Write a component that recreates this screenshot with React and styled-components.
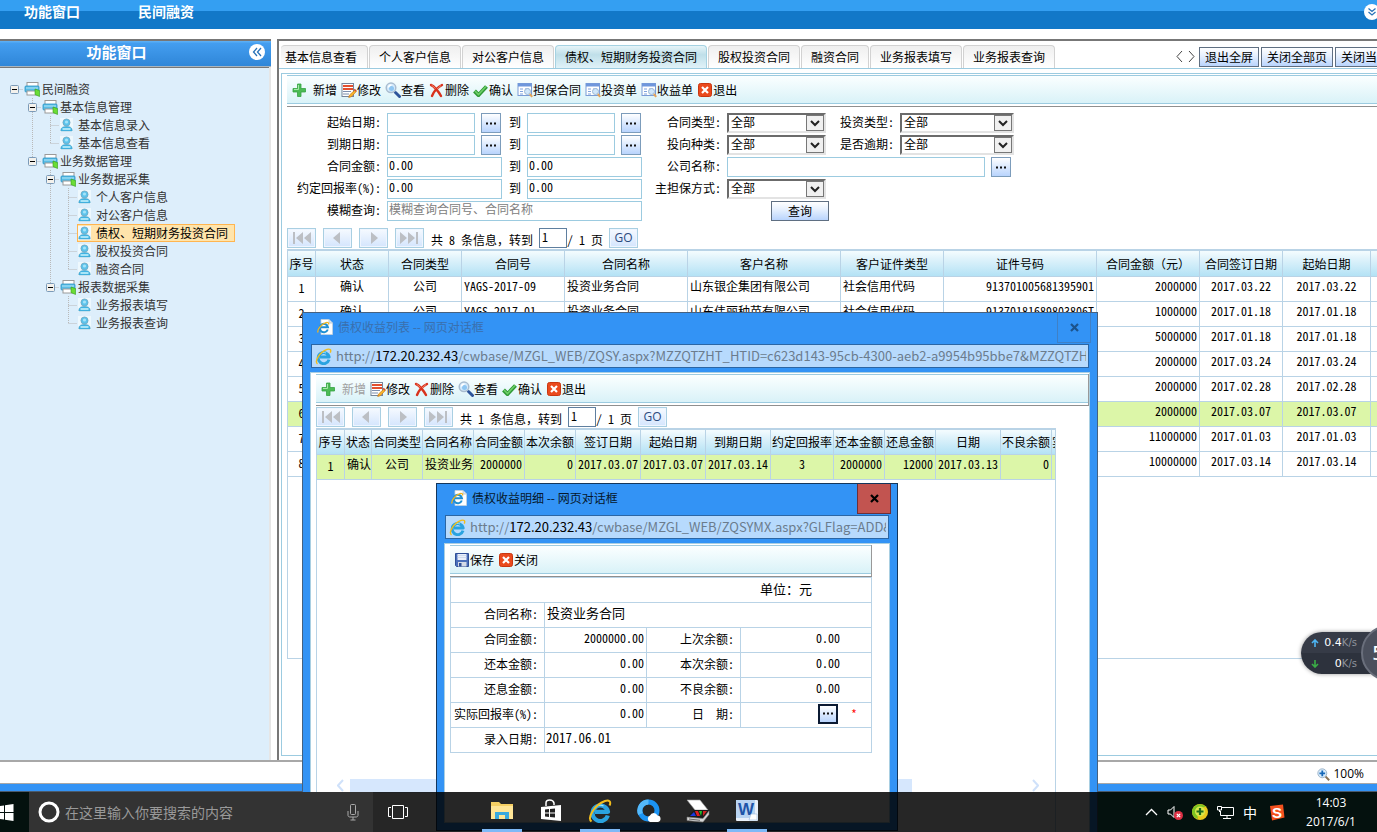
import React from "react";
import styled, { createGlobalStyle, css } from "styled-components";

const SONG = '"Noto Sans Mono CJK SC", "Noto Sans CJK SC", sans-serif';
const UI = '"Open Sans", "Noto Sans CJK SC", sans-serif';
const LINE = "#b9d3e6";
const FRAME = "#9ccbe0";
const BLUE = "#3393f5";

const Global = createGlobalStyle`
  * { box-sizing: border-box; }
  body { margin: 0; overflow: hidden; font: 12px/14px ${SONG}; color: #000; }
  button, input, select { font: inherit; color: inherit; margin: 0; }
  a { color: inherit; text-decoration: none; }
  svg { display: block; flex: none; }
  ul { list-style: none; margin: 0; padding: 0; }
`;

/* ---------- page shell ---------- */
const Desktop = styled.div`
  position: relative;
  display: flex;
  flex-direction: column;
  height: 100vh;
  overflow: hidden;
  background: rgb(28, 112, 96);
`;
const TopBar = styled.header`
  display: flex;
  align-items: flex-start;
  flex: none;
  height: 29px;
  padding: 2px 0 0 24px;
  gap: 58px;
  background: linear-gradient(#349ff2 0 11px, #1278c8 11px 100%);
  color: #fff;
  font-size: 14px;
  line-height: 18px;
  font-weight: 700;
`;
const TopSpacer = styled.span`
  flex: 1;
`;
const RoundButton = styled.button`
  display: grid;
  place-items: center;
  flex: none;
  width: 16px;
  height: 16px;
  padding: 0;
  border: 0;
  border-radius: 50%;
  background: #fff;
  color: #2872b8;
`;
const TopRound = styled(RoundButton)`
  margin: 2px -3px 0 0;
`;
const Workspace = styled.div`
  display: flex;
  flex: 1;
  min-height: 0;
  gap: 6px;
  padding-top: 10px;
  background: #fff;
`;
const Sidebar = styled.aside`
  display: flex;
  flex-direction: column;
  flex: none;
  width: 271px;
  border-top: 2px solid #777;
`;
const SideHeader = styled.div`
  display: flex;
  align-items: center;
  height: 26px;
  padding: 0 6px 4px 0;
  background: linear-gradient(#5aaef5 0 1px, #449ef0 2px, #2f86d8 100%);
  border-bottom: 1px solid #a9b4bd;
  color: #fff;
`;
const SideTitle = styled.h2`
  flex: 1;
  margin: 0 0 0 -16px;
  text-align: center;
  font-size: 15px;
  line-height: 20px;
  font-weight: 700;
`;
const Tree = styled.ul`
  flex: 1;
  margin: 0 2px 0 0;
  padding: 12px 0 0 5px;
  background: #ddeefb;
  border-top: 1px solid #777;
  box-shadow: 2px 0 0 #e6e6e6;
  color: #333;
`;
const TreeRow = styled.li`
  display: flex;
  align-items: center;
  height: 18px;
`;
const TreeLink = styled.a`
  display: flex;
  align-items: center;
  height: 18px;
  gap: ${(p) => (p.$leaf ? 5 : 2)}px;
  padding-left: 1px;
  ${(p) =>
    p.$active &&
    css`
      padding-right: 6px;
      background: #ffe4ab;
      border: 1px solid #ffb550;
      padding-left: 0;
      color: #000;
    `}
`;

/* ---------- main panel ---------- */
const Main = styled.main`
  display: flex;
  flex-direction: column;
  flex: 1;
  min-width: 0;
  border-top: 2px solid #777;
  border-left: 2px solid #777;
  overflow: hidden;
`;
const TabBar = styled.nav`
  display: flex;
  align-items: flex-end;
  flex: none;
  gap: 1px;
  height: 28px;
  padding-left: 2px;
  border-bottom: 1px solid ${FRAME};
`;
const Tab = styled.button`
  flex: none;
  height: 23px;
  padding: 0 9px;
  border: 1px solid #d2d2d2;
  border-bottom: 0;
  border-radius: 4px 4px 0 0;
  background: linear-gradient(#efefef, #fff);
  white-space: nowrap;
  &:first-child {
    padding: 0 10px 0 4px;
    border-left: 0;
  }
  ${(p) =>
    p.$active &&
    css`
      border-color: #a5d2e2;
      background: linear-gradient(#e6f4f8, #bfdfe9 40%, #e0f2f8);
    `}
`;
const TabTools = styled.div`
  display: flex;
  align-items: center;
  flex: none;
  gap: 2px;
  height: 23px;
  margin-left: auto;
  margin-right: -30px;
`;
const Arrows = styled.div`
  display: flex;
  gap: 5px;
  margin-right: 2px;
`;
const BareButton = styled.button`
  padding: 0;
  border: 0;
  background: none;
`;
const PushButton = styled.button`
  height: 20px;
  width: ${(p) => p.$w}px;
  flex: none;
  padding: 0 5px;
  border: 1px solid #5f6f82;
  background: linear-gradient(#fff, #e4effe 45%, #b9d4fd);
  white-space: nowrap;
`;
const DotButton = styled.button`
  display: grid;
  place-items: center;
  flex: none;
  width: 20px;
  height: 20px;
  padding: 0;
  border: ${(p) => (p.$focus ? "2px solid #0b1a33" : "1px solid #7c9cbb")};
  background: linear-gradient(#fff, #dbe9fe 50%, #b9d4fd);
`;
const Frame = styled.section`
  display: flex;
  flex-direction: column;
  flex: 1;
  min-height: 0;
  margin: 4px 0 4px 2px;
  padding: 1px 0 0 5px;
  border: solid ${FRAME};
  border-width: 1px 0 1px 1px;
`;
const ToolbarBox = styled.div`
  flex: none;
  padding-bottom: 2px;
  border-bottom: 1px solid #8f8f8f;
  border-right: ${(p) => (p.$edge ? "1px solid #999" : "0")};
`;
const ToolbarInner = styled.div`
  display: flex;
  align-items: center;
  gap: 4px;
  height: 29px;
  padding: 0 4px;
  border: solid ${FRAME};
  border-width: 1px 0;
  background: linear-gradient(#fbffff, #d9f2f8);
`;
const ToolItem = styled.button`
  display: flex;
  align-items: center;
  gap: ${(p) => (p.$wide ? 6 : 0)}px;
  padding: 0;
  border: 0;
  background: none;
  white-space: nowrap;
  color: ${(p) => (p.disabled ? "#a0a0a0" : "#000")};
`;
const Filters = styled.form`
  display: grid;
  flex: none;
  grid-template-columns: 94px 115px 13px 115px 73px 99px 62px 114px;
  grid-auto-rows: 20px;
  gap: 2px 6px;
  padding: 6px 0 7px;
`;
const Label = styled.label`
  grid-column: ${(p) => p.$col || "auto"};
  line-height: 18px;
  text-align: right;
  white-space: nowrap;
`;
const Cell = styled.div`
  display: flex;
  gap: 6px;
  grid-column: ${(p) => p.$col || "auto"};
  padding-left: ${(p) => p.$indent || 0}px;
`;
const TextInput = styled.input`
  flex: ${(p) => (p.$w ? "none" : "1")};
  width: ${(p) => (p.$w ? p.$w + "px" : "auto")};
  min-width: 0;
  height: 20px;
  padding: 0 1px 5px;
  border: 1px solid ${FRAME};
  background: #fff;
  line-height: 13px;
  &::placeholder {
    color: #808080;
    opacity: 1;
  }
`;
const SelectWrap = styled.div`
  position: relative;
  flex: 1;
  height: 20px;
  border: 2px solid;
  border-color: #6b6b6b #e3e3e3 #e3e3e3 #6b6b6b;
`;
const SelectBox = styled.select`
  display: block;
  appearance: none;
  width: 100%;
  height: 16px;
  padding: 0 2px 2px;
  border: 0;
  background: #fff;
  line-height: 14px;
`;
const SelectArrow = styled.span`
  position: absolute;
  top: 0;
  right: 0;
  display: grid;
  place-items: center;
  width: 18px;
  height: 16px;
  border: 1px solid #777;
  background: #f0f0f0;
  pointer-events: none;
`;
const PagerBar = styled.div`
  display: flex;
  align-items: center;
  flex: none;
  height: 21px;
  padding-bottom: 1px;
  white-space: pre;
`;
const PageButton = styled.button`
  display: grid;
  place-items: center;
  width: 29px;
  height: 20px;
  margin-right: 7px;
  padding: 0;
  border: 1px solid #a9cfe2;
  background: linear-gradient(#f6faff, #d4e5fd);
  box-shadow: inset 0 0 0 1px #eef5ff;
  color: #2b4a7d;
  font: 12px/14px ${UI};
`;
const PageText = styled.label`
  line-height: 18px;
  padding-top: 3px;
`;
const PageInput = styled.input`
  width: 28px;
  height: 20px;
  margin-left: 6px;
  padding: 0 2px 4px;
  border: 1px solid #5f7f9f;
`;

/* ---------- data tables ---------- */
const GridBox = styled.div`
  flex: ${(p) => p.$flex};
  min-height: 0;
  overflow: hidden;
  width: ${(p) => (p.$w ? p.$w + "px" : "auto")};
  border: solid ${LINE};
  border-width: ${(p) => (p.$w ? "2px 1px 0" : "2px 0 1px 1px")};
`;
const Table = styled.table`
  table-layout: fixed;
  width: ${(p) => p.$w}px;
  border-spacing: 0;
`;
const Th = styled.th`
  height: ${(p) => p.$h}px;
  padding: 0;
  overflow: hidden;
  border: solid ${LINE};
  border-width: 0 1px 1px 0;
  background: linear-gradient(#f2fbfe 0 1px, #e0f3fb 30%, #b4e2f5);
  font-weight: 400;
  white-space: nowrap;
`;
const Tr = styled.tr`
  background: ${(p) => (p.$on ? "#dcf6a8" : "#fff")};
`;
const Td = styled.td`
  height: 25px;
  padding: ${(p) => (p.$index ? "0 0 2px" : "2px 2px 8px")};
  overflow: hidden;
  border: solid ${LINE};
  border-width: 0 1px 1px 0;
  text-align: ${(p) => p.$align};
  vertical-align: ${(p) => (p.$index ? "middle" : "top")};
  white-space: nowrap;
`;

/* ---------- windows ---------- */
const Window = styled.section`
  position: absolute;
  left: ${(p) => p.$x}px;
  top: ${(p) => p.$y}px;
  bottom: ${(p) => p.$bottom}px;
  width: ${(p) => p.$w}px;
  display: flex;
  flex-direction: column;
  padding: 0 7px 7px;
  border: 1px solid ${(p) => (p.$active ? "#14365c" : "#46617f")};
  background: ${BLUE};
`;
const TitleBar = styled.div`
  display: flex;
  align-items: flex-start;
  flex: none;
  gap: 5px;
  height: 31px;
  padding-left: 7px;
  color: ${(p) => (p.$active ? "#06182c" : "#3a6fad")};
`;
const TitleText = styled.h3`
  flex: 1;
  margin: 5px 0 0;
  font: 12px/18px "Noto Sans CJK SC", sans-serif;
`;
const TitleIcon = styled.span`
  margin-top: 6px;
`;
const CloseButton = styled.button`
  width: 34px;
  height: 30px;
  margin-right: -1px;
  padding: 0;
  display: grid;
  place-items: center;
  border: 1px solid ${(p) => (p.$active ? "#6c2f3a" : "#3f80c6")};
  border-top: 0;
  background: ${(p) => (p.$active ? "#c25450" : "transparent")};
  color: ${(p) => (p.$active ? "#000" : "#1c538c")};
`;
const Address = styled.div`
  display: flex;
  align-items: center;
  flex: none;
  gap: 4px;
  height: 24px;
  margin: 0 1px 4px;
  padding: 0 2px 0 3px;
  border: 1px solid #2b66a5;
  background: #b7dafd;
  color: #6b7c8d;
  font: 13px/20px "Noto Sans CJK SC", sans-serif;
  white-space: nowrap;
`;
const AddressText = styled.span`
  overflow: hidden;
  b {
    font-weight: 400;
    color: #000;
  }
`;
const WindowBody = styled.div`
  display: flex;
  flex-direction: column;
  flex: 1;
  min-height: 0;
  padding: ${(p) => p.$pad};
  border: 1px solid #a9cfe2;
  background: #fff;
`;
const ListPager = styled.div`
  padding-top: 1px;
`;
const ScrollBar = styled.div`
  display: flex;
  align-items: center;
  gap: 6px;
  height: 17px;
  margin: 0 16px 0 20px;
`;
const ScrollThumb = styled.div`
  width: 562px;
  height: 14px;
  margin-right: auto;
  background: #d6e7fd;
`;
const ScrollArea = styled.div`
  display: flex;
  flex-direction: column;
  justify-content: flex-end;
  flex: 1;
  width: 740px;
  padding-bottom: 69px;
  border: solid ${LINE};
  border-width: 0 1px;
`;
const FormTable = styled.table`
  table-layout: fixed;
  width: 422px;
  border: solid ${LINE};
  border-width: 1px 0 0 1px;
  border-spacing: 0;
`;
const FormCell = styled.td`
  height: 25px;
  padding: 0 ${(p) => p.$pr || 0}px 3px ${(p) => p.$pl || 0}px;
  border: solid ${LINE};
  border-width: 0 1px 1px 0;
  text-align: ${(p) => p.$align || "left"};
  font-size: ${(p) => p.$size || 12}px;
  line-height: 14px;
  white-space: pre;
`;
const FormInput = styled.input`
  display: block;
  width: 100%;
  height: 21px;
  padding: 0 0 3px;
  border: 0;
  background: none;
  text-align: inherit;
`;
const DateCell = styled.div`
  display: flex;
  align-items: center;
  justify-content: flex-end;
  gap: 13px;
  color: #f00;
`;

/* ---------- status bar, taskbar ---------- */
const StatusBar = styled.footer`
  display: flex;
  align-items: center;
  justify-content: flex-end;
  flex: none;
  gap: 3px;
  height: 24px;
  padding: 3px 13px 0 0;
  border: solid #a8a8a8;
  border-width: 2px 0 1px;
  background: #fff;
  font: 12px/16px ${UI};
`;
const WindowEdge = styled.div`
  flex: none;
  height: 8px;
  background: ${BLUE};
  border-bottom: 1px solid #4a5a6c;
`;
const Taskbar = styled.footer`
  position: relative;
  z-index: 5;
  display: flex;
  flex: none;
  height: 40px;
  background: rgba(0, 0, 0, 0.85);
  color: #fff;
`;
const StartButton = styled.button`
  width: 29px;
  padding: 0;
  border: 0;
  background: none;
  display: flex;
  align-items: center;
  justify-content: flex-start;
`;
const SearchBox = styled.label`
  display: flex;
  align-items: center;
  gap: 5px;
  width: 344px;
  padding: 0 14px 0 9px;
  background: #333;
`;
const SearchInput = styled.input`
  flex: 1;
  min-width: 0;
  padding: 0;
  border: 0;
  outline: 0;
  background: none;
  font: 14px/20px "Noto Sans CJK SC", sans-serif;
  &::placeholder {
    color: #999;
    opacity: 1;
  }
`;
const TaskButton = styled.button`
  display: grid;
  place-items: center;
  width: 49px;
  padding: 0;
  border: 0;
  background: none;
`;
const AppList = styled.div`
  display: flex;
  gap: 9px;
  margin-left: 60px;
`;
const AppButton = styled.button`
  display: grid;
  place-items: center;
  width: 40px;
  height: 40px;
  padding: 0;
  border: 0;
  background: none;
  border-bottom: 3px solid ${(p) => (p.$open ? "#7db9f7" : "transparent")};
`;
const Tray = styled.div`
  display: flex;
  align-items: center;
  gap: 9px;
  margin-left: auto;
  padding-right: 19px;
`;
const Clock = styled.time`
  width: 54px;
  margin-left: 10px;
  text-align: center;
  font: 12px/19px ${UI};
  white-space: pre;
`;
const ImeText = styled.span`
  margin-right: 2px;
  font: 14px/16px "Noto Sans CJK SC", sans-serif;
`;
const Meter = styled.aside`
  position: absolute;
  right: 0;
  top: 632px;
  z-index: 4;
  display: flex;
  width: 76px;
  height: 42px;
  border-radius: 21px 0 0 21px;
  background: linear-gradient(#363b47 0 21px, #2d323d 21px);
  box-shadow: 0 0 4px rgba(0, 0, 0, 0.4);
  color: #fff;
  font: 11px/21px "DejaVu Sans", sans-serif;
`;
const MeterRows = styled.div`
  flex: none;
  width: 56px;
  padding-left: 10px;
`;
const MeterRow = styled.div`
  display: flex;
  align-items: center;
  justify-content: space-between;
  small {
    color: #8e939c;
    font-size: 10px;
  }
`;
const MeterDial = styled.div`
  flex: none;
  width: 56px;
  height: 56px;
  margin-left: 4px;
  padding-left: 9px;
  border-radius: 50%;
  border: 2px solid #6a6f7c;
  background: #4b505d;
  font-size: 20px;
  line-height: 52px;
`;
const Clip = styled.div`
  flex: 1;
  display: flex;
  margin: -7px 0;
  overflow: hidden;
`;

/* ---------- icons ---------- */
const Ic = ({ w = 16, h, children, vb }) => (
  <svg width={w} height={h || w} viewBox={vb || "0 0 16 16"} fill="none" aria-hidden="true">
    {children}
  </svg>
);
const PlusIcon = () => (
  <Ic>
    <path d="M6.500 2h3.500v4.500h4.500V10H10v4.500H6.500V10H2V6.500h4.500z" fill="#4cbb55" stroke="#35a343" strokeWidth=".8" />
    <path d="M7.500 3v4.500H3" stroke="#a5e8a8" />
  </Ic>
);
const EditIcon = () => (
  <Ic>
    <rect x="1" y="1.500" width="11.500" height="13" fill="#fff" stroke="#76859a" />
    <path d="M2 4h10M2 7h10" stroke="#e2502f" strokeWidth="2" />
    <path d="M2 9.500h8M2 12h6" stroke="#7d8fae" strokeWidth="1.200" />
    <path d="M14 8l-5.500 5-.8 2.500 2.600-.8 5-5.200z" fill="#f8b62c" stroke="#c8771b" strokeWidth=".7" />
    <path d="M13.300 7.300l2 2" stroke="#d64b32" strokeWidth="1.500" />
  </Ic>
);
const LookIcon = () => (
  <Ic>
    <path d="M10.500 10.500l4 4" stroke="#2d549b" strokeWidth="3" strokeLinecap="round" />
    <circle cx="6" cy="5.800" r="4.800" fill="#d3eafc" stroke="#a9bccf" strokeWidth="1.500" />
    <circle cx="6.500" cy="6.500" r="2.500" fill="#8ec6f2" />
    <path d="M3.500 5.500a3 3 0 013-2.500" stroke="#fff" strokeWidth="1.500" />
  </Ic>
);
const DeleteIcon = () => (
  <Ic>
    <path d="M2 3c3 1 8 7 10 11M13 3C9 5 5 9 3 14" stroke="#d8321c" strokeWidth="2.400" strokeLinecap="round" />
    <path d="M2.500 3l4 3.500M12 3.500L8 7" stroke="#f4866b" strokeWidth="1" />
  </Ic>
);
const CheckIcon = () => (
  <Ic>
    <path d="M1.500 9L5.500 13 13.500 4.500" stroke="#2f9a35" strokeWidth="4" strokeLinejoin="round" />
    <path d="M2 9l3.500 3.500L13 4.500" stroke="#6fcf6a" strokeWidth="1.600" />
  </Ic>
);
const FormIcon = () => (
  <Ic>
    <rect x="1" y="1.500" width="13.500" height="12" fill="#fff" stroke="#7a9cd6" />
    <rect x="1" y="1.500" width="13.500" height="3" fill="#6f97dc" />
    <path d="M3 7h3M3 9.500h3M3 12h3M8 7h4" stroke="#7fa2dd" />
    <circle cx="10.500" cy="9.500" r="3" fill="#cfe6fa" stroke="#9cb8d4" />
    <path d="M12.800 12l2.400 2.800" stroke="#e4a45a" strokeWidth="2" />
  </Ic>
);
const ExitIcon = () => (
  <Ic>
    <rect x="1.500" y="1.500" width="13" height="13" rx="2" fill="#ea4a1d" stroke="#c93710" />
    <path d="M5 5l6 6M11 5l-6 6" stroke="#fff" strokeWidth="2.200" />
  </Ic>
);
const SaveIcon = () => (
  <Ic>
    <path d="M1.500 1.500h13v13h-12l-1-1z" fill="#4a70bb" stroke="#2f5097" />
    <rect x="3.500" y="2" width="9" height="6" fill="#e9f0fa" />
    <path d="M3.500 3.500h9M3.500 5.500h9" stroke="#c3d2e8" strokeWidth=".7" />
    <rect x="4" y="10" width="8.500" height="4.500" fill="#d3dbe7" />
    <rect x="5" y="11" width="2.500" height="3.500" fill="#2f5097" />
  </Ic>
);
const FolderIcon = () => (
  <Ic>
    <rect x="3" y="1.500" width="11" height="5" fill="#fff" stroke="#9a9a9a" />
    <rect x="1" y="5" width="14" height="6" rx="1" fill="#58bde6" stroke="#2a93c4" strokeWidth=".8" />
    <path d="M2 7h12" stroke="#b5e6f8" />
    <rect x="3" y="10" width="10" height="4" fill="#fff" stroke="#9a9a9a" />
    <path d="M11 8l4.500 1.500v6L11 13.500z" fill="#6bdc35" stroke="#2f9e18" strokeWidth=".6" />
  </Ic>
);
const UserIcon = () => (
  <Ic w={13} h={14} vb="0 0 13 14">
    <rect width="13" height="14" fill="#eef8fd" />
    <path d="M.8 13c0-3.500 2-4.500 5.700-4.500s5.700 1 5.700 4.500z" fill="#3fb5e6" stroke="#4a9cc0" strokeWidth=".5" />
    <circle cx="6.500" cy="4.500" r="3.600" fill="#5cc3ec" stroke="#6b9bb0" strokeWidth=".6" />
    <path d="M2.500 11h8" stroke="#c4f1fc" strokeWidth="1.600" />
    <circle cx="6.500" cy="4" r="1.600" fill="#a5e3f8" />
  </Ic>
);
const Dots = () => (
  <Ic w={12} h={3} vb="0 0 12 3">
    <path d="M1 .5h2v2H1zM5 .5h2v2H5zM9 .5h2v2H9z" fill="#111" />
  </Ic>
);
const DoubleLeft = ({ down }) => (
  <Ic w={10} vb="0 0 10 10">
    {down ? (
      <path d="M1.500 1.500L5 4.500l3.500-3M1.500 5L5 8l3.500-3" stroke="currentColor" strokeWidth="1.300" />
    ) : (
      <path d="M5 1L1.500 5 5 9M9 1L5.500 5 9 9" stroke="currentColor" strokeWidth="1.300" />
    )}
  </Ic>
);
const Angle = ({ flip, color = "#444", sw = 1 }) => (
  <Ic w={7} h={13} vb="0 0 7 13">
    <path d={flip ? "M1 1l5 5.500L1 12" : "M6 1L1 6.500 6 12"} stroke={color} strokeWidth={sw} />
  </Ic>
);
const IeMark = ({ w = 17 }) => (
  <Ic w={w} vb="0 0 24 24">
    <path d="M19.800 16.500A7.800 7.800 0 1 1 20 12.800H7" stroke="#2aa3e0" strokeWidth="4.200" strokeLinejoin="round" />
    <path d="M6.500 9.500a6.500 6.500 0 019-2.500" stroke="#9be0fa" strokeWidth="1.400" />
    <path d="M3.500 22.500C-1 19 6 6 17 2c4-1.200 6.500.3 4.500 4.500" stroke="#f2bd1c" strokeWidth="2" />
  </Ic>
);
const IePage = () => (
  <Ic w={16} vb="0 0 16 16">
    <path d="M4 .5h8l3.500 3.500v11.500H4z" fill="#fff" stroke="#c8d3dc" strokeWidth=".8" />
    <path d="M12 .5V4h3.500" fill="#dde6ee" stroke="#b5c2cd" strokeWidth=".8" />
    <path d="M10.800 10.500A4.200 4.200 0 1 1 11 8.300H4" stroke="#1f8fd2" strokeWidth="2" />
    <path d="M1 13.500C0 11 4 5 9 3.600c2-.5 3 .2 2.500 1.900" stroke="#f2b51c" strokeWidth="1.300" />
  </Ic>
);

/* ---------- reusable parts ---------- */
const ICONS = {
  plus: PlusIcon, edit: EditIcon, look: LookIcon, del: DeleteIcon,
  check: CheckIcon, form: FormIcon, exit: ExitIcon, save: SaveIcon,
};
function Toolbar({ items, edge }) {
  return (
    <ToolbarBox $edge={edge}>
      <ToolbarInner role="toolbar">
        {items.map(([icon, text, disabled]) => {
          const Icon = ICONS[icon];
          return (
            <ToolItem key={text} type="button" $wide={icon === "plus"} disabled={disabled}>
              <Icon />
              {text}
            </ToolItem>
          );
        })}
      </ToolbarInner>
    </ToolbarBox>
  );
}

const PAGER_ARROWS = [
  ["首页", "M2 0h2v12H2zM12 0v12L5 6zM20 0v12l-7-6z"],
  ["上一页", "M13 0v12L6 6z"],
  ["下一页", "M8 0v12l7-6z"],
  ["末页", "M17 0h2v12h-2zM1 0v12l7-6zM9 0v12l7-6z"],
];
function Pager({ id, total }) {
  return (
    <PagerBar>
      {PAGER_ARROWS.map(([label, d]) => (
        <PageButton key={label} type="button" aria-label={label}>
          <Ic w={21} h={12} vb="0 0 21 12">
            <path d={d} fill="#bcbfc4" />
          </Ic>
        </PageButton>
      ))}
      <PageText htmlFor={id}>{`共 ${total} 条信息，转到`}</PageText>
      <PageInput id={id} defaultValue="1" />
      <PageText as="span">{"/ 1 页 "}</PageText>
      <PageButton type="button">GO</PageButton>
    </PagerBar>
  );
}

function DataTable({ columns, rows, selected, head = 26 }) {
  const total = columns.reduce((sum, c) => sum + c[1], 0);
  return (
    <Table $w={total}>
      <colgroup>
        {columns.map((c, i) => (
          <col key={i} width={c[1]} />
        ))}
      </colgroup>
      <thead>
        <tr>
          {columns.map((c, i) => (
            <Th key={i} $h={head}>{c[0]}</Th>
          ))}
        </tr>
      </thead>
      <tbody>
        {rows.map((row, r) => (
          <Tr key={r} $on={r === selected}>
            {columns.map((c, i) => (
              <Td key={i} $index={i === 0} $align={c[2] || "center"}>
                {row[i]}
              </Td>
            ))}
          </Tr>
        ))}
      </tbody>
    </Table>
  );
}

function Select({ id }) {
  return (
    <SelectWrap>
      <SelectBox id={id} defaultValue="all">
        <option value="all">全部</option>
      </SelectBox>
      <SelectArrow>
        <Ic w={10} h={7} vb="0 0 10 7">
          <path d="M1 1l4 4 4-4" stroke="#222" strokeWidth="2" />
        </Ic>
      </SelectArrow>
    </SelectWrap>
  );
}

function PickButton({ label }) {
  return (
    <DotButton type="button" aria-label={label}>
      <Dots />
    </DotButton>
  );
}

/* ---------- tree ---------- */
const TREE = [
  ["R", "民间融资"],
  [" B", "基本信息管理"],
  [" vt", "基本信息录入"],
  [" vl", "基本信息查看"],
  [" E", "业务数据管理"],
  ["  B", "业务数据采集"],
  ["  vt", "个人客户信息"],
  ["  vt", "对公客户信息"],
  ["  vt", "债权、短期财务投资合同", true],
  ["  vt", "股权投资合同"],
  ["  vl", "融资合同"],
  ["  E", "报表数据采集"],
  ["   t", "业务报表填写"],
  ["   l", "业务报表查询"],
];
const GUIDES = {
  " ": "",
  v: "M9.500 0v18",
  t: "M9.500 0v18M9.500 9.500h9",
  l: "M9.500 0v10M9.500 9.500h9",
  R: "M9.500 9.500h9",
  B: "M9.500 0v18M9.500 9.500h9",
  E: "M9.500 0v9M9.500 9.500h9",
};
function Guide({ kind }) {
  const isToggle = "RBE".includes(kind);
  return (
    <svg width="18" height="18" viewBox="0 0 18 18" fill="none" aria-hidden="true">
      <path d={GUIDES[kind]} stroke="#b9b9b9" strokeDasharray="1 1" />
      {isToggle && (
        <>
          <rect x="5.500" y="5.500" width="8" height="8" rx="1" fill="#f3f1ec" stroke="#7b9ab8" />
          <path d="M7 9.500h5" stroke="#000" />
        </>
      )}
    </svg>
  );
}
function NavTree() {
  return (
    <Tree>
      {TREE.map(([guides, text, active]) => {
        const leaf = "tl".includes(guides[guides.length - 1]);
        return (
          <TreeRow key={text}>
            {guides.split("").map((g, i) => (
              <Guide key={i} kind={g} />
            ))}
            <TreeLink href="#" $leaf={leaf} $active={active}>
              {leaf ? <UserIcon /> : <FolderIcon />}
              {text}
            </TreeLink>
          </TreeRow>
        );
      })}
    </Tree>
  );
}

/* ---------- data ---------- */
const TABS = [
  "基本信息查看", "个人客户信息", "对公客户信息", "债权、短期财务投资合同",
  "股权投资合同", "融资合同", "业务报表填写", "业务报表查询",
];
const MAIN_TOOLS = [
  ["plus", "新增"], ["edit", "修改"], ["look", "查看"], ["del", "删除"], ["check", "确认"],
  ["form", "担保合同"], ["form", "投资单"], ["form", "收益单"], ["exit", "退出"],
];
const LIST_TOOLS = [
  ["plus", "新增", true], ["edit", "修改"], ["del", "删除"],
  ["look", "查看"], ["check", "确认"], ["exit", "退出"],
];
const MAIN_COLUMNS = [
  ["序号", 28], ["状态", 73], ["合同类型", 73], ["合同号", 103, "left"], ["合同名称", 123, "left"],
  ["客户名称", 153, "left"], ["客户证件类型", 103, "left"], ["证件号码", 153, "right"],
  ["合同金额（元）", 103, "right"], ["合同签订日期", 83], ["起始日期", 88], ["", 84],
];
const contract = (n, amount, date, rest = ["", "", "", "", "", "", ""]) => [
  n, ...rest, amount, date, date, "",
];
const MAIN_ROWS = [
  contract(1, "2000000", "2017.03.22", ["确认", "公司", "YAGS-2017-09", "投资业务合同", "山东银企集团有限公司", "社会信用代码", "913701005681395901"]),
  contract(2, "1000000", "2017.01.18", ["确认", "公司", "YAGS-2017-01", "投资业务合同", "山东伟丽种苗有限公司", "社会信用代码", "91370181689803806T"]),
  contract(3, "5000000", "2017.01.18"),
  contract(4, "2000000", "2017.03.24"),
  contract(5, "2000000", "2017.02.28"),
  contract(6, "2000000", "2017.03.07"),
  contract(7, "11000000", "2017.01.03"),
  contract(8, "10000000", "2017.03.14"),
];
const LIST_COLUMNS = [
  ["序号", 28], ["状态", 27], ["合同类型", 51], ["合同名称", 51, "left"], ["合同金额", 51, "right"],
  ["本次余额", 51, "right"], ["签订日期", 65], ["起始日期", 65], ["到期日期", 65], ["约定回报率", 63],
  ["还本金额", 51, "right"], ["还息金额", 51, "right"], ["日期", 65], ["不良余额", 51, "right"], ["实", 12],
];
const LIST_ROWS = [
  [1, "确认", "公司", "投资业务", "2000000", "0", "2017.03.07", "2017.03.07", "2017.03.14", "3", "2000000", "12000", "2017.03.13", "0", ""],
];

/* ---------- screens ---------- */
function DateRange({ id, label }) {
  return (
    <>
      <Label htmlFor={id} $col={1}>{label}</Label>
      <Cell>
        <TextInput id={id} $w={88} />
        <PickButton label={label} />
      </Cell>
      <Label htmlFor={id + "-to"}>到</Label>
      <Cell>
        <TextInput id={id + "-to"} $w={88} />
        <PickButton label={label} />
      </Cell>
    </>
  );
}
function NumberRange({ id, label }) {
  return (
    <>
      <Label htmlFor={id} $col={1}>{label}</Label>
      <Cell><TextInput id={id} defaultValue="0.00" /></Cell>
      <Label htmlFor={id + "-to"}>到</Label>
      <Cell><TextInput id={id + "-to"} defaultValue="0.00" /></Cell>
    </>
  );
}
function Picker({ id, label }) {
  return (
    <>
      <Label htmlFor={id}>{label}</Label>
      <Cell><Select id={id} /></Cell>
    </>
  );
}

function ContractPage() {
  return (
    <Frame>
      <Toolbar items={MAIN_TOOLS} />
      <Filters onSubmit={(e) => e.preventDefault()}>
        <DateRange id="start" label="起始日期:" />
        <Picker id="ctype" label="合同类型:" />
        <Picker id="itype" label="投资类型:" />
        <DateRange id="end" label="到期日期:" />
        <Picker id="target" label="投向种类:" />
        <Picker id="overdue" label="是否逾期:" />
        <NumberRange id="amount" label="合同金额:" />
        <Label htmlFor="company">公司名称:</Label>
        <Cell $col="6 / 9">
          <TextInput id="company" $w={258} />
          <PickButton label="公司名称" />
        </Cell>
        <NumberRange id="rate" label="约定回报率(%):" />
        <Picker id="guarantee" label="主担保方式:" />
        <Label htmlFor="fuzzy" $col={1}>模糊查询:</Label>
        <Cell $col="2 / 5">
          <TextInput id="fuzzy" placeholder="模糊查询合同号、合同名称" />
        </Cell>
        <Cell $col="6 / 8" $indent={44}>
          <PushButton type="submit" $w={58}>查询</PushButton>
        </Cell>
      </Filters>
      <Pager id="page-main" total={8} />
      <GridBox $flex="0 1 410px">
        <DataTable columns={MAIN_COLUMNS} rows={MAIN_ROWS} selected={5} />
      </GridBox>
    </Frame>
  );
}

function DialogFrame({ title, host, path, active, pad, children, ...pos }) {
  return (
    <Window role="dialog" aria-label={title} $active={active} {...pos}>
      <TitleBar $active={active}>
        <TitleIcon><IePage /></TitleIcon>
        <TitleText>{title} -- 网页对话框</TitleText>
        <CloseButton type="button" aria-label="关闭" $active={active}>
          <Ic w={9} h={9} vb="0 0 9 9">
            <path d="M1 1l7 7M8 1L1 8" stroke="currentColor" strokeWidth="2.200" />
          </Ic>
        </CloseButton>
      </TitleBar>
      <Address>
        <IeMark />
        <AddressText>http://<b>{host}</b>{path}</AddressText>
      </Address>
      <WindowBody $pad={pad}>{children}</WindowBody>
    </Window>
  );
}

function ListDialog() {
  return (
    <DialogFrame
      title="债权收益列表"
      host="172.20.232.43"
      path="/cwbase/MZGL_WEB/ZQSY.aspx?MZZQTZHT_HTID=c623d143-95cb-4300-aeb2-a9954b95bbe7&MZZQTZHT_H"
      pad="1px 0 0 5px"
      $x={302} $y={312} $w={796} $bottom={-40}
    >
      <Toolbar items={LIST_TOOLS} edge />
      <ListPager><Pager id="page-list" total={1} /></ListPager>
      <GridBox $flex="0 0 auto" $w={740}>
        <DataTable columns={LIST_COLUMNS} rows={LIST_ROWS} selected={0} head={25} />
      </GridBox>
      <ScrollArea>
        <ScrollBar>
          <Angle color="#cfe1fa" sw={2} />
          <ScrollThumb />
          <Angle flip color="#cfe1fa" sw={2} />
        </ScrollBar>
      </ScrollArea>
    </DialogFrame>
  );
}

const DETAIL = [
  ["合同金额:", "2000000.00", "上次余额:", "0.00"],
  ["还本金额:", "0.00", "本次余额:", "0.00"],
  ["还息金额:", "0.00", "不良余额:", "0.00"],
];
function DetailDialog() {
  return (
    <DialogFrame
      title="债权收益明细"
      host="172.20.232.43"
      path="/cwbase/MZGL_WEB/ZQSYMX.aspx?GLFlag=ADD&id"
      active
      pad="1px 17px 0 5px"
      $x={436} $y={483} $w={462} $bottom={1}
    >
      <Toolbar items={[["save", "保存"], ["exit", "关闭"]]} edge />
      <FormTable>
        <colgroup>
          <col width="94" /><col width="102" /><col width="94" /><col width="131" />
        </colgroup>
        <tbody>
          <tr>
            <FormCell colSpan={4} $align="right" $pr={59} $size={13}>单位：元</FormCell>
          </tr>
          <tr>
            <FormCell $align="right" $pr={6}><label htmlFor="d-name">合同名称:</label></FormCell>
            <FormCell colSpan={3} $pl={2} $size={13}><FormInput id="d-name" defaultValue="投资业务合同" /></FormCell>
          </tr>
          {DETAIL.map(([a, va, b, vb], i) => (
            <tr key={a}>
              <FormCell $align="right" $pr={6}><label htmlFor={"da" + i}>{a}</label></FormCell>
              <FormCell $align="right" $pr={2}><FormInput id={"da" + i} defaultValue={va} /></FormCell>
              <FormCell $align="right" $pr={6}><label htmlFor={"db" + i}>{b}</label></FormCell>
              <FormCell $align="right" $pr={31}><FormInput id={"db" + i} defaultValue={vb} /></FormCell>
            </tr>
          ))}
          <tr>
            <FormCell $align="right" $pr={6}><label htmlFor="d-rate">实际回报率(%):</label></FormCell>
            <FormCell $align="right" $pr={2}><FormInput id="d-rate" defaultValue="0.00" /></FormCell>
            <FormCell $align="right" $pr={6}><label htmlFor="d-date">{"日  期:"}</label></FormCell>
            <FormCell $align="right" $pr={14}>
              <DateCell>
                <DotButton id="d-date" type="button" $focus><Dots /></DotButton>*
              </DateCell>
            </FormCell>
          </tr>
          <tr>
            <FormCell $align="right" $pr={6}><label htmlFor="d-entry">录入日期:</label></FormCell>
            <FormCell colSpan={3} $pl={1} $size={13}><FormInput id="d-entry" defaultValue="2017.06.01" /></FormCell>
          </tr>
        </tbody>
      </FormTable>
    </DialogFrame>
  );
}

function AppIcons() {
  return (
    <AppList>
      <AppButton type="button" aria-label="文件资源管理器" $open>
        <Ic w={22} h={19} vb="0 0 22 19">
          <path d="M0 1h8l2 2h12v15H0z" fill="#f5cf63" />
          <path d="M0 5h22v13H0z" fill="#ffe596" />
          <path d="M4 18v-7h14v7h-4v-4H8v4z" fill="#39a9de" />
        </Ic>
      </AppButton>
      <AppButton type="button" aria-label="应用商店">
        <Ic w={22} h={23} vb="0 0 22 23">
          <path d="M1 8l20-2v16L1 20z" fill="#fff" />
          <path d="M6 7V4c0-4 7-4 8 0v2" stroke="#fff" strokeWidth="1.500" />
          <path d="M5 10.500l4-.4v3.500H5zM10 10l5-.5v4h-5zM5 14.500h4V18l-4-.4zM10 14.500h5v4l-5-.5z" fill="#222" />
        </Ic>
      </AppButton>
      <AppButton type="button" aria-label="浏览器" $open><IeMark w={24} /></AppButton>
      <AppButton type="button" aria-label="QQ浏览器">
        <Ic w={24} vb="0 0 24 24">
          <circle cx="11.500" cy="11.500" r="8.500" stroke="#1b93f3" strokeWidth="5" />
          <path d="M3.500 15A8.500 8.500 0 0111.500 3" stroke="#54b9fb" strokeWidth="5" />
          <path d="M13 23a3.500 3.500 0 010-6.500 4 4 0 017.500 0A3.300 3.300 0 0121 23z" fill="#fff" />
        </Ic>
      </AppButton>
      <AppButton type="button" aria-label="扫描仪">
        <Ic w={24} vb="0 0 24 24">
          <path d="M1 1h13l8 10H9z" fill="#fff" stroke="#999" strokeWidth=".6" />
          <path d="M1 18l7-7h15l-6 8z" fill="#1a1a1a" />
          <path d="M4 17l4-4 2 4z" fill="#1a38e0" />
          <path d="M9 12h3l2 5h-3z" fill="#e02020" />
          <path d="M13 12h3l-1 5z" fill="#22c02a" />
          <path d="M17 12h4l-4 5z" fill="#d02020" />
          <path d="M1 18l16 1.500L23 12v3.500L17 23 1 21.500z" fill="#d5d5d5" stroke="#777" strokeWidth=".6" />
          <path d="M3 20l11 1.300" stroke="#666" />
        </Ic>
      </AppButton>
      <AppButton type="button" aria-label="Word" $open>
        <Ic w={22} vb="0 0 22 22">
          <rect width="22" height="21" rx="1" fill="#e9f1fb" />
          <rect width="19" height="18" fill="#b9d4f2" />
          <text x="2" y="15" fontFamily="Liberation Sans" fontWeight="700" fontSize="17" fill="#1f55a8">W</text>
          <path d="M15 14h6v6h-8z" fill="#fff" stroke="#a8c2e2" strokeWidth=".7" />
        </Ic>
      </AppButton>
    </AppList>
  );
}

function SystemTray() {
  return (
    <Tray>
      <Ic w={13} h={8} vb="0 0 13 8"><path d="M1 7l5.500-5.500L12 7" stroke="#fff" strokeWidth="1.300" /></Ic>
      <Ic w={16} h={16}>
        <path d="M1 6h2.500L7 2.500v11L3.500 10H1z" stroke="#fff" />
        <circle cx="11.500" cy="11.500" r="4.500" fill="#dd3044" />
        <path d="M9.800 9.800l3.400 3.400M13.200 9.800l-3.400 3.400" stroke="#fff" strokeWidth="1.200" />
      </Ic>
      <Ic w={16}>
        <circle cx="8" cy="8" r="8" fill="#e9c81d" />
        <path d="M0 8a8 8 0 0114-5C8 2 4 8 6 15A8 8 0 010 8z" fill="#7cc522" />
        <circle cx="8" cy="7.500" r="5" fill="#d8e84a" />
        <path d="M8 4v7M4.500 7.500h7" stroke="#1c6a1c" strokeWidth="2.200" />
      </Ic>
      <Ic w={17} h={15} vb="0 0 17 15">
        <path d="M5 2.500h11.500v8H3.500V6M10 10.500V14M6 13.500h8" stroke="#fff" />
        <path d="M.5 1.500h4v3.500h-4zM2.500 5v2" stroke="#fff" />
      </Ic>
      <ImeText>中</ImeText>
      <Ic w={17} vb="0 0 17 17">
        <path d="M2 2l13-1.500 1.500 13L4 16.500z" fill="#f4511e" />
        <text x="4" y="14" fontFamily="Liberation Sans" fontWeight="700" fontSize="15" fill="#fff">S</text>
      </Ic>
      <Clock>{"14:03\n2017/6/1"}</Clock>
    </Tray>
  );
}

export default function App() {
  return (
    <Desktop>
      <Global />
      <TopBar>
        <a href="#">功能窗口</a>
        <a href="#">民间融资</a>
        <TopSpacer />
        <TopRound type="button" aria-label="展开"><DoubleLeft down /></TopRound>
      </TopBar>
      <Workspace>
        <Sidebar>
          <SideHeader>
            <SideTitle>功能窗口</SideTitle>
            <RoundButton type="button" aria-label="折叠"><DoubleLeft /></RoundButton>
          </SideHeader>
          <NavTree />
        </Sidebar>
        <Main>
          <TabBar>
            {TABS.map((t, i) => (
              <Tab key={t} type="button" $active={i === 3}>{t}</Tab>
            ))}
            <TabTools>
              <Arrows>
                <BareButton type="button" aria-label="向左"><Angle /></BareButton>
                <BareButton type="button" aria-label="向右"><Angle flip /></BareButton>
              </Arrows>
              <PushButton type="button" $w={60}>退出全屏</PushButton>
              <PushButton type="button" $w={72}>关闭全部页</PushButton>
              <PushButton type="button" $w={72}>关闭当前页</PushButton>
            </TabTools>
          </TabBar>
          <ContractPage />
        </Main>
      </Workspace>
      <StatusBar>
        <Ic w={13} h={13}>
          <path d="M10 10l5 5" stroke="#8a7355" strokeWidth="2.500" />
          <circle cx="6.500" cy="6.500" r="5.500" fill="#d9ecfb" stroke="#8fa9c0" />
          <path d="M6.500 3v7M3 6.500h7" stroke="#1668b8" strokeWidth="2.200" />
        </Ic>
        100%
      </StatusBar>
      <WindowEdge />
      <ListDialog />
      <DetailDialog />
      <Meter>
        <MeterRows>
          <MeterRow>
            <Ic w={8} vb="0 0 8 8"><path d="M4 8V1M1 4l3-3 3 3" stroke="#4db4f2" strokeWidth="1.600" /></Ic>
            <span>0.4<small>K/s</small></span>
          </MeterRow>
          <MeterRow>
            <Ic w={8} vb="0 0 8 8"><path d="M4 0v7M1 4l3 3 3-3" stroke="#3aae46" strokeWidth="1.600" /></Ic>
            <span>0<small>K/s</small></span>
          </MeterRow>
        </MeterRows>
        <Clip><MeterDial>5</MeterDial></Clip>
      </Meter>
      <Taskbar>
        <StartButton type="button" aria-label="开始">
          <Ic w={14} h={17} vb="0 0 14 17">
            <path d="M0 2l4-.6V8H0zM5 1.200L13.500 0v8H5zM0 9h4v6.500L0 15zM5 9h8.500v8L5 15.700z" fill="#fff" />
          </Ic>
        </StartButton>
        <SearchBox>
          <Ic w={22} vb="0 0 22 22"><circle cx="11" cy="11" r="9" stroke="#fff" strokeWidth="3" /></Ic>
          <SearchInput aria-label="搜索" placeholder="在这里输入你要搜索的内容" />
          <Ic w={12} h={17} vb="0 0 12 17">
            <rect x="3.500" y=".5" width="5" height="10" rx="1" stroke="#aaa" />
            <path d="M1 7v4.500c0 1 1 1.500 2 1.500h6c1 0 2-.5 2-1.500V7M6 13v3M3.500 16h5" stroke="#aaa" />
          </Ic>
        </SearchBox>
        <TaskButton type="button" aria-label="任务视图">
          <Ic w={20} h={14} vb="0 0 20 14">
            <path d="M4.500.5h11v13h-11zM3 2.500H.5v9H3M17 2.500h2.500v9H17" stroke="#fff" />
          </Ic>
        </TaskButton>
        <AppIcons />
        <SystemTray />
      </Taskbar>
    </Desktop>
  );
}
